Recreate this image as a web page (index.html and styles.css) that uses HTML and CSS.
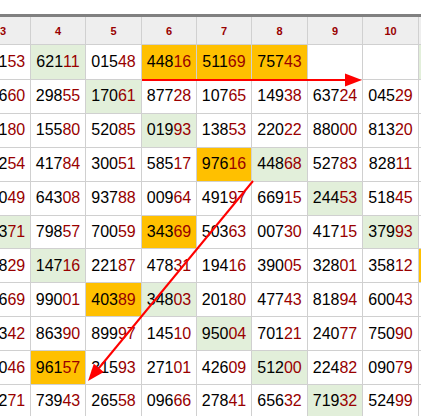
FILE: index.html
```html
<!DOCTYPE html>
<html>
<head>
<meta charset="utf-8">
<link rel="stylesheet" href="styles.css">
</head>
<body>
<div class="page">
  <div class="sheet">
    <div class="h">3</div><div class="h">4</div><div class="h">5</div><div class="h">6</div><div class="h">7</div><div class="h">8</div><div class="h">9</div><div class="h">10</div><div class="h"></div>

    <div class="c">471<i>53</i></div><div class="c g">621<i>11</i></div><div class="c">015<i>48</i></div><div class="c o">448<i>16</i></div><div class="c o">511<i>69</i></div><div class="c o">757<i>43</i></div><div class="c"></div><div class="c"></div><div class="c g"></div>

    <div class="c">516<i>60</i></div><div class="c">298<i>55</i></div><div class="c g">170<i>61</i></div><div class="c">877<i>28</i></div><div class="c">107<i>65</i></div><div class="c">149<i>38</i></div><div class="c">637<i>24</i></div><div class="c">045<i>29</i></div><div class="c"></div>

    <div class="c">281<i>80</i></div><div class="c">155<i>80</i></div><div class="c">520<i>85</i></div><div class="c g">019<i>93</i></div><div class="c">138<i>53</i></div><div class="c">220<i>22</i></div><div class="c">880<i>00</i></div><div class="c">813<i>20</i></div><div class="c"></div>

    <div class="c">732<i>54</i></div><div class="c">417<i>84</i></div><div class="c">300<i>51</i></div><div class="c">585<i>17</i></div><div class="c o">976<i>16</i></div><div class="c g">448<i>68</i></div><div class="c">527<i>83</i></div><div class="c">828<i>11</i></div><div class="c"></div>

    <div class="c">880<i>49</i></div><div class="c">643<i>08</i></div><div class="c">937<i>88</i></div><div class="c">009<i>64</i></div><div class="c">491<i>97</i></div><div class="c">669<i>15</i></div><div class="c g">244<i>53</i></div><div class="c">518<i>45</i></div><div class="c"></div>

    <div class="c g">203<i>71</i></div><div class="c">798<i>57</i></div><div class="c">700<i>59</i></div><div class="c o">343<i>69</i></div><div class="c">503<i>63</i></div><div class="c">007<i>30</i></div><div class="c">417<i>15</i></div><div class="c g">379<i>93</i></div><div class="c"></div>

    <div class="c">168<i>29</i></div><div class="c g">147<i>16</i></div><div class="c">221<i>87</i></div><div class="c">478<i>31</i></div><div class="c">194<i>16</i></div><div class="c">390<i>05</i></div><div class="c">328<i>01</i></div><div class="c">358<i>12</i></div><div class="c o"></div>

    <div class="c">346<i>69</i></div><div class="c">990<i>01</i></div><div class="c o">403<i>89</i></div><div class="c g">348<i>03</i></div><div class="c">201<i>80</i></div><div class="c">477<i>43</i></div><div class="c">818<i>94</i></div><div class="c">600<i>43</i></div><div class="c"></div>

    <div class="c">703<i>42</i></div><div class="c">863<i>90</i></div><div class="c">899<i>97</i></div><div class="c">145<i>10</i></div><div class="c g">950<i>04</i></div><div class="c">701<i>21</i></div><div class="c">240<i>77</i></div><div class="c">750<i>90</i></div><div class="c"></div>

    <div class="c">590<i>46</i></div><div class="c o">961<i>57</i></div><div class="c">315<i>93</i></div><div class="c">271<i>01</i></div><div class="c">426<i>09</i></div><div class="c g">512<i>00</i></div><div class="c">224<i>82</i></div><div class="c">090<i>79</i></div><div class="c"></div>

    <div class="c">412<i>71</i></div><div class="c">739<i>43</i></div><div class="c">265<i>58</i></div><div class="c">096<i>66</i></div><div class="c">278<i>41</i></div><div class="c">656<i>32</i></div><div class="c g">719<i>32</i></div><div class="c">524<i>99</i></div><div class="c"></div>
  </div>

  <svg class="arrows" width="421" height="416" viewBox="0 0 421 416">
    <line x1="142" y1="80" x2="347" y2="80" stroke="#ff0000" stroke-width="2"/>
    <polygon points="345,73.5 362,80 345,86.5" fill="#ff0000"/>
    <line x1="253" y1="181" x2="99" y2="368" stroke="#ff0000" stroke-width="2"/>
    <polygon points="88,381 103.8,372 93.8,363.8" fill="#ff0000"/>
  </svg>
</div>
</body>
</html>
```

FILE: styles.css
```css
html, body {
  margin: 0;
  padding: 0;
  background: #ffffff;
  overflow: hidden;
}

.page {
  position: relative;
  width: 421px;
  height: 416px;
  overflow: hidden;
  font-family: "Liberation Sans", Arial, sans-serif;
}

.sheet {
  display: grid;
  grid-template-columns: 54px 54px 55px 54px 54px 55px 54px 55px 54px;
  grid-template-rows: 27px 34px repeat(10, 32.9px);
  gap: 1px;
  margin-top: 14px;
  margin-left: -24px;
  width: max-content;
  border-top: 3px solid #808080;
  background: #d0d0d0;
}

.h {
  background: #eeeeee;
  color: #990000;
  font-weight: bold;
  font-size: 11px;
  display: flex;
  align-items: center;
  justify-content: center;
}

.c {
  background: #ffffff;
  color: #000000;
  font-size: 16px;
  display: flex;
  align-items: center;
  justify-content: center;
}

.c i {
  font-style: normal;
  color: #990000;
}

.g {
  background: #e2efda;
}

.o {
  background: #ffc000;
}

.arrows {
  position: absolute;
  left: 0;
  top: 0;
  pointer-events: none;
}
```
